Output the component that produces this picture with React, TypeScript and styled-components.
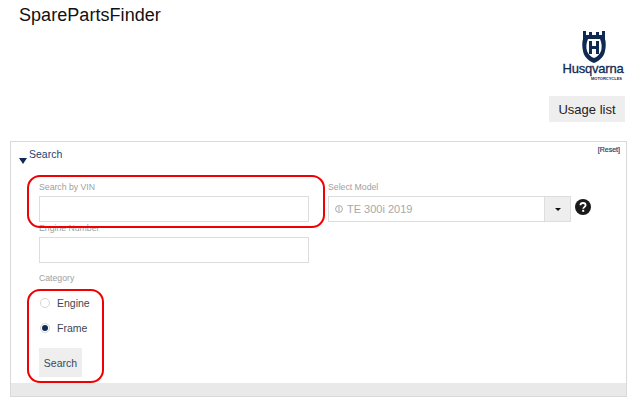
import { createGlobalStyle } from 'styled-components';
import styled from 'styled-components';

const GlobalStyle = createGlobalStyle`
	html, body {
		margin: 0;
		padding: 0;
		background: #ffffff;
		font-family: 'Liberation Sans', Arial, sans-serif;
	}
`;

const Page = styled.div`
	position: relative;
	width: 640px;
	height: 411px;
	overflow: hidden;
	padding: 0 13px 0 10px;
	box-sizing: border-box;
`;

const Header = styled.header`
	display: flex;
	justify-content: space-between;
	height: 141px;
`;

const Title = styled.h1`
	margin: 5px 0 0 9px;
	font-size: 18px;
	line-height: 20px;
	font-weight: normal;
	letter-spacing: 0.05px;
	color: #111111;
`;

const Brand = styled.div`
	display: flex;
	flex-direction: column;
	align-items: flex-end;
	padding: 31px 2px 0 0;
`;

const LogoBox = styled.div`
	display: flex;
	flex-direction: column;
	align-items: center;
	width: 64px;
	color: #0f2a52;
`;

const LogoMark = styled.svg`
	display: block;
	width: 26px;
	height: 32px;
	margin-left: 1px;
`;

const LogoWord = styled.div`
	font-size: 13px;
	line-height: 12px;
	-webkit-text-stroke: 0.3px #0f2a52;
	letter-spacing: -0.2px;
`;

const LogoSub = styled.div`
	font-size: 4px;
	line-height: 5px;
	font-weight: bold;
	align-self: flex-end;
	margin: 1px 3px 0 0;
`;

const UsageButton = styled.button`
	margin-top: 15px;
	width: 76px;
	height: 26px;
	padding: 0;
	border: none;
	background: #eeeeee;
	color: #222222;
	font-family: inherit;
	font-size: 13px;
`;

const Panel = styled.section`
	position: relative;
	height: 256px;
	box-sizing: border-box;
	border: 1px solid #d9d9d9;
	display: flex;
	flex-direction: column;
`;

const PanelBody = styled.div`
	flex: 1;
	padding: 0 0 0 28px;
`;

const PanelHead = styled.div`
	display: flex;
	align-items: flex-start;
	height: 40px;
	margin-left: -20px;
	padding-top: 6px;
	box-sizing: border-box;
`;

const Caret = styled.span`
	width: 0;
	height: 0;
	margin: 10px 2px 0 0;
	border-left: 4px solid transparent;
	border-right: 4px solid transparent;
	border-top: 6px solid #0f2a52;
`;

const PanelTitle = styled.span`
	font-size: 10.5px;
	line-height: 13px;
	color: #1f3f6e;
`;

const ResetLink = styled.a`
	position: absolute;
	top: 3px;
	right: 6px;
	font-size: 7px;
	line-height: 9px;
	-webkit-text-stroke: 0.2px #1f3f6e;
	color: #1f3f6e;
`;

const FieldRow = styled.div`
	display: flex;
	align-items: flex-start;
	gap: 19px;
`;

const Field = styled.div`
	display: flex;
	flex-direction: column;
	width: 270px;
`;

const Label = styled.label`
	font-size: 8.7px;
	line-height: 10px;
	height: 14px;
	color: #a0a0a0;
`;

const TextInput = styled.div`
	height: 26px;
	box-sizing: border-box;
	border: 1px solid #dddddd;
	background: #ffffff;
`;

const SelectRow = styled.div`
	display: flex;
	align-items: center;
`;

const SelectBox = styled.div`
	display: flex;
	width: 243px;
	height: 26px;
	box-sizing: border-box;
	border: 1px solid #dddddd;
`;

const SelectValue = styled.div`
	flex: 1;
	display: flex;
	align-items: center;
	gap: 4px;
	padding-left: 6px;
	font-size: 11px;
	line-height: 24px;
	color: #a8a8a8;
`;

const SelectArrow = styled.div`
	width: 25px;
	display: flex;
	align-items: center;
	justify-content: center;
	background: #eeeeee;
	border-left: 1px solid #dddddd;

	&::after {
		content: '';
		border-left: 3px solid transparent;
		border-right: 3px solid transparent;
		border-top: 3px solid #111111;
	}
`;

const HelpIcon = styled.svg`
	width: 16px;
	height: 16px;
	margin: -5px 0 0 4px;
`;

const SecondField = styled(Field)`
	margin-top: 1px;
`;

const CategoryLabel = styled(Label)`
	display: block;
	margin-top: 10px;
	height: 10px;
`;

const RadioRow = styled.div`
	display: flex;
	align-items: center;
	gap: 7px;
	height: 25px;
	padding-left: 1px;
	font-size: 10.5px;
	color: #3c4654;
`;

const RadioGroup = styled.div`
	margin-top: 7px;
`;

const RadioDot = styled.span<{ $checked?: boolean }>`
	width: 10px;
	height: 10px;
	box-sizing: border-box;
	border-radius: 50%;
	border: 1px solid #d5d5d5;
	display: flex;
	align-items: center;
	justify-content: center;

	&::after {
		content: '';
		width: 6px;
		height: 6px;
		border-radius: 50%;
		background: ${(props) => (props.$checked ? '#0f2a52' : 'transparent')};
	}
`;

const SearchButton = styled.button`
	display: block;
	margin-top: 8px;
	width: 43px;
	height: 29px;
	padding: 0;
	border: none;
	background: #eeeeee;
	color: #3c4654;
	font-family: inherit;
	font-size: 10.5px;
`;

const PanelFoot = styled.div`
	height: 13px;
	background: #e9e9e9;
`;

const Highlight = styled.div<{ $top: number; $left: number; $w: number; $h: number }>`
	position: absolute;
	top: ${(props) => props.$top}px;
	left: ${(props) => props.$left}px;
	width: ${(props) => props.$w}px;
	height: ${(props) => props.$h}px;
	box-sizing: border-box;
	border: 2px solid #f00000;
	border-radius: 13px;
	pointer-events: none;
`;

const App = () => {
	return (
		<Page>
			<GlobalStyle />
			<Header>
				<Title>SparePartsFinder</Title>
				<Brand>
					<LogoBox>
						<LogoMark viewBox="0 0 26 32">
							<path
								fill="#0f2a52"
								d="M2 0h3v4h3V1h3v3h4V1h3v3h3V0h3v8c1 3 1 8 0 12-1 6-6 10-11 12C8 30 3 26 2 20 1 16 1 11 2 8z"
							/>
							<path
								fill="#ffffff"
								d="M7 8h12c2 4 2 9 1 12-1 3-4 6-7 7-3-1-6-4-7-7-1-3-1-8 1-12z"
							/>
							<path fill="#0f2a52" d="M8 10h3v5h4v-5h3v13h-3v-5h-4v5H8z" />
						</LogoMark>
						<LogoWord>Husqvarna</LogoWord>
						<LogoSub>MOTORCYCLES</LogoSub>
					</LogoBox>
					<UsageButton>Usage list</UsageButton>
				</Brand>
			</Header>
			<Panel>
				<PanelBody>
					<PanelHead>
						<Caret />
						<PanelTitle>Search</PanelTitle>
					</PanelHead>
					<ResetLink>[Reset]</ResetLink>
					<FieldRow>
						<Field>
							<Label>Search by VIN</Label>
							<TextInput />
						</Field>
						<Field>
							<Label>Select Model</Label>
							<SelectRow>
								<SelectBox>
									<SelectValue>
										<svg width="8" height="8" viewBox="0 0 8 8">
											<circle cx="4" cy="4" r="3.4" fill="none" stroke="#a8a8a8" />
											<path d="M4 1.5v5" stroke="#a8a8a8" />
										</svg>
										TE 300i 2019
									</SelectValue>
									<SelectArrow />
								</SelectBox>
								<HelpIcon viewBox="0 0 16 16">
									<circle cx="8" cy="8" r="8" fill="#1a1a1a" />
									<path
										d="M5.4 6.2C5.5 4.7 6.6 4 8 4c1.5 0 2.6.9 2.6 2.2 0 1.9-2.4 1.9-2.4 3.6"
										fill="none"
										stroke="#ffffff"
										strokeWidth="1.8"
									/>
									<rect x="7.2" y="10.8" width="2" height="2" fill="#ffffff" />
								</HelpIcon>
							</SelectRow>
						</Field>
					</FieldRow>
					<SecondField>
						<Label>Engine Number</Label>
						<TextInput />
					</SecondField>
					<CategoryLabel>Category</CategoryLabel>
					<RadioGroup>
						<RadioRow>
							<RadioDot />
							Engine
						</RadioRow>
						<RadioRow>
							<RadioDot $checked />
							Frame
						</RadioRow>
					</RadioGroup>
					<SearchButton>Search</SearchButton>
				</PanelBody>
				<PanelFoot />
			</Panel>
			<Highlight $top={175} $left={27} $w={298} $h={53} />
			<Highlight $top={289} $left={27} $w={77} $h={94} />
		</Page>
	);
};

export default App;
